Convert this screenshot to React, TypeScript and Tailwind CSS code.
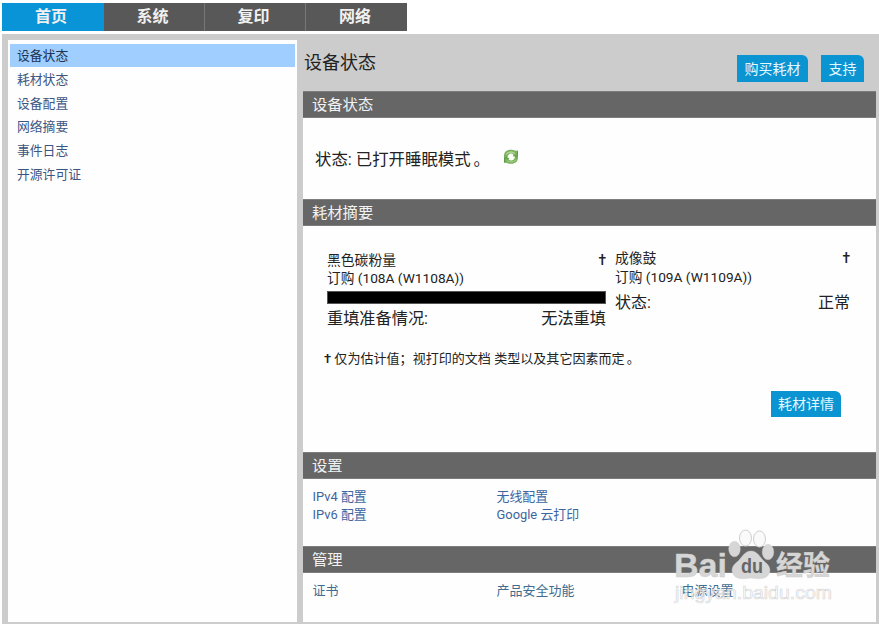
import React from 'react';

const tabs = ['系统', '复印', '网络'];
const menu = ['耗材状态', '设备配置', '网络摘要', '事件日志', '开源许可证'];

function SectionTitle({ children }: { children: React.ReactNode }) {
  return (
    <h2 className="h-[27px] shrink-0 border-y border-[#7d7d7d] bg-[#666666] pl-[9px] text-[15.3px] leading-[27px] text-[#f2f2f2]">
      {children}
    </h2>
  );
}

function Button({ children, className }: { children: React.ReactNode; className: string }) {
  return (
    <button className={`rounded-tr-[6px] bg-[#0a94d2] text-center text-[14px] leading-[26px] text-[#e4f8ff] ${className}`}>
      {children}
    </button>
  );
}

function RefreshIcon() {
  return (
    <svg className="ml-[13px] mt-[-6px] h-[16px] w-[16px]" viewBox="0 0 16 16">
      <path d="M1 6C1.500 2.500 4 .8 7.500.8c2 0 3.500.3 4.700 1L15 1.500v7c0 3.800-2.700 6.300-6.700 6.300-2 0-3.500-.3-4.800-1L1 14z" fill="#79b05b" />
      <path d="M3 5.500C5 2.600 9 2.200 12 4.400" fill="none" stroke="#b4d69c" strokeWidth="1.300" />
      <path d="M13.200 10.500c-2 2.700-6 3.200-9 1" fill="none" stroke="#a3cb88" strokeWidth="1.100" />
      <path d="M14.500 2.500V7H11M1.500 13V9H5" fill="none" stroke="#5b9646" strokeWidth="0.900" />
      <path d="M4.600 8C4.800 5.700 6.300 4.500 8 4.500c1 0 1.800.3 2.400.9L10 7.400h2C11.800 9.900 10 11.500 8.100 11.500c-1 0-1.800-.3-2.400-1L6.300 8.700H4.500z" fill="#fbfff5" />
    </svg>
  );
}

function Watermark() {
  return (
    <svg className="pointer-events-none absolute left-[660px] top-[520px] h-[100px] w-[190px]" viewBox="0 0 190 100">
      <g fill="#d6d6d6" stroke="#cfcfcf" strokeWidth="0.400">
        <text x="14" y="57" fontFamily="Liberation Sans, Arial, sans-serif" fontSize="33" fontWeight="700" textLength="53" lengthAdjust="spacingAndGlyphs">Bai</text>
        <text x="116" y="55" fontFamily="Noto Sans CJK SC, sans-serif" fontSize="27" fontWeight="700" textLength="54" lengthAdjust="spacingAndGlyphs">经验</text>
        <ellipse cx="74.500" cy="29" rx="5.800" ry="7.800" />
        <ellipse cx="108" cy="32" rx="5.800" ry="7.800" />
        <ellipse cx="85.500" cy="18" rx="6" ry="8" fill="#fafafa" strokeWidth="1" />
        <ellipse cx="99.500" cy="19" rx="6" ry="8" fill="#fafafa" strokeWidth="1" />
        <path d="M91 31c-7 0-9 7-14 11-5 4-6 8-4 12 3 6 11 5 18 4 7 1 15 2 18-4 2-4 1-8-4-12-5-4-7-11-14-11z" />
      </g>
      <text x="81" y="53" fontFamily="Liberation Sans, Arial, sans-serif" fontSize="20" fontWeight="700" fill="#666" textLength="22" lengthAdjust="spacingAndGlyphs">du</text>
      <text x="15" y="79" fontFamily="Liberation Sans, Arial, sans-serif" fontSize="19" fill="#ffffff" fillOpacity="0.600" stroke="#cfcfcf" strokeOpacity="0.850" strokeWidth="0.700" textLength="157" lengthAdjust="spacingAndGlyphs">jingyan.baidu.com</text>
    </svg>
  );
}

export default function App() {
  return (
    <div className="relative flex h-[624px] w-[879px] flex-col overflow-hidden bg-white pl-[2px] pt-[3px] font-[Roboto,'Noto_Sans_CJK_SC',sans-serif] text-[#222]">
      <nav className="flex h-[28px] w-[405px] shrink-0 bg-[#585858] text-center text-[16px] font-bold leading-[27px] text-[#f0f0f0]">
        <div className="w-[102px] bg-[#0a94d8] pr-[4px]">首页</div>
        {tabs.map((t) => (
          <div key={t} className="w-[101px] border-r border-[#777] pr-[3px] last:border-r-0">{t}</div>
        ))}
      </nav>
      <div className="mt-[3px] flex min-h-0 flex-1 bg-[#cccccc] pb-[2px] pl-[6px] pr-[3px] pt-[6px]">
        <aside className="w-[289px] shrink-0 bg-[#fefefe] px-[2px] pt-[4px] text-[12.8px] text-[#3c5682]">
          <div className="h-[23px] bg-[#9fceff] pl-[7px] leading-[23px] text-[#1d3354]">设备状态</div>
          <ul className="pl-[7px] pt-[1px]">
            {menu.map((m) => (
              <li key={m} className="h-[23.7px] leading-[24px]">{m}</li>
            ))}
          </ul>
        </aside>
        <main className="ml-[6px] flex flex-1 flex-col">
          <header className="flex h-[51px] shrink-0 justify-between pl-[1px] pr-[12px]">
            <h1 className="text-[18px] leading-[45px] text-[#222]">设备状态</h1>
            <div className="flex gap-[13px] pt-[15px]">
              <Button className="h-[27px] w-[71px]">购买耗材</Button>
              <Button className="h-[27px] w-[43px]">支持</Button>
            </div>
          </header>
          <div className="flex flex-1 flex-col bg-[#fefefe]">
            <SectionTitle>设备状态</SectionTitle>
            <div className="flex h-[81px] shrink-0 items-center pl-[12px] pt-[3px] text-[16.4px]">
              <span className="whitespace-pre">状态: 已打开睡眠模式<span className="ml-[3px]">。</span></span>
              <RefreshIcon />
            </div>
            <SectionTitle>耗材摘要</SectionTitle>
            <div className="flex h-[226px] shrink-0 flex-col pl-[20px] pr-[24px] pt-[22px]">
              <div className="flex h-[99px] gap-[9px] pl-[4px] pr-[2px]">
                <div className="w-[279px] pt-[3px]">
                  <div className="flex justify-between text-[13.8px] leading-[18px]"><span>黑色碳粉量</span><span className="font-medium">†</span></div>
                  <div className="text-[13.7px] leading-[19px]">订购 (108A (W1108A))</div>
                  <div className="mt-[3px] h-[13px] border border-[#555] bg-black" />
                  <div className="flex justify-between text-[16.2px] leading-[30px]"><span>重填准备情况:</span><span>无法重填</span></div>
                </div>
                <div className="flex-1 pt-[1px]">
                  <div className="flex justify-between text-[13.8px] leading-[19px]"><span>成像鼓</span><span className="font-medium">†</span></div>
                  <div className="text-[13.7px] leading-[19px]">订购 (109A (W1109A))</div>
                  <div className="flex justify-between text-[16px] leading-[31px]"><span>状态:</span><span>正常</span></div>
                </div>
              </div>
              <p className="h-[43px] pl-px text-[13.05px] leading-[24px]"><span className="font-medium">†</span> 仅为估计值；视打印的文档 类型以及其它因素而定<span className="ml-[2px]">。</span></p>
              <div className="flex justify-end pr-[11px] pt-[1px]">
                <Button className="h-[26px] w-[70px]">耗材详情</Button>
              </div>
            </div>
            <SectionTitle>设置</SectionTitle>
            <div className="grid h-[67px] shrink-0 grid-cols-[184px_185px_1fr] content-start pl-[9.500px] pt-[9px] text-[12.9px] leading-[18px] text-[#3c64a0]">
              <a>IPv4 配置</a><a>无线配置</a><span />
              <a>IPv6 配置</a><a>Google 云打印</a>
            </div>
            <SectionTitle>管理</SectionTitle>
            <div className="grid grid-cols-[184px_185px_1fr] pl-[9.500px] pt-[9px] text-[13px] leading-[18px] text-[#3f6d91]">
              <a>证书</a><a>产品安全功能</a><a>电源设置</a>
            </div>
          </div>
        </main>
      </div>
      <Watermark />
    </div>
  );
}
